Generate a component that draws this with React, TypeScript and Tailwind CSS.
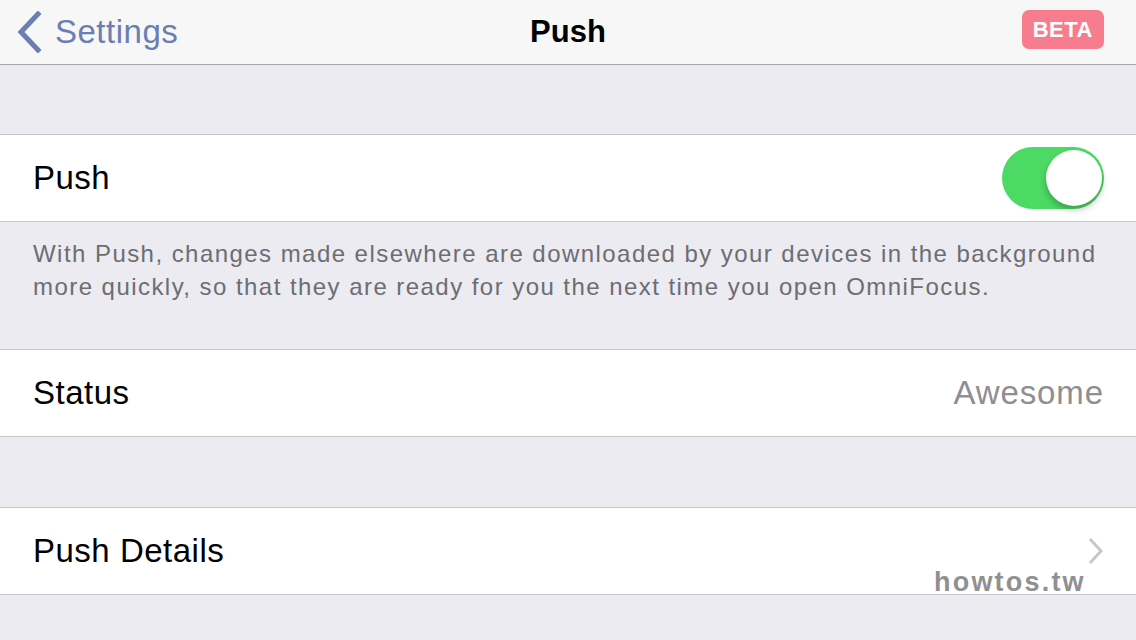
const FONT = { fontFamily: '"Liberation Sans", Arial, sans-serif' }

function BackChevron() {
  return (
    <svg width="26" height="42" viewBox="0 0 26 42" fill="none" aria-hidden="true">
      <path d="M22 3 L5 21 L22 39" stroke="#6a7eb1" strokeWidth="5" strokeLinecap="square" />
    </svg>
  )
}

function DisclosureChevron() {
  return (
    <svg width="18" height="28" viewBox="0 0 18 28" fill="none" aria-hidden="true">
      <path d="M3 2 L14 14 L3 26" stroke="#c7c7cc" strokeWidth="3" />
    </svg>
  )
}

function Toggle() {
  return (
    <div className="relative h-[62px] w-[102px] rounded-full bg-[#4cd964]">
      <div className="absolute right-[2px] top-[3px] h-[56px] w-[56px] rounded-full bg-white shadow-[0_4px_6px_rgba(0,0,0,0.25)]" />
    </div>
  )
}

export default function App() {
  return (
    <div className="relative h-[640px] w-[1136px] overflow-hidden bg-[#ebebf1]" style={FONT}>
      {/* Nav bar */}
      <div className="flex h-[65px] items-center justify-between border-b border-[#a7a7aa] bg-[#f7f7f8] pl-[16px] pr-[32px]">
        <div className="flex w-[216px] items-center gap-[13px]">
          <BackChevron />
          <span className="text-[33px] tracking-[0.5px] text-[#6a7eb1]">Settings</span>
        </div>
        <span className="text-[31px] font-bold text-black">Push</span>
        <div className="flex w-[200px] justify-end">
          <span className="mb-[5px] rounded-[7px] bg-[#f77d8e] px-[11px] py-[5px] text-[22px] font-bold leading-[29px] tracking-[0.5px] text-white">
            BETA
          </span>
        </div>
      </div>

      <div className="h-[69px]" />

      {/* Push row */}
      <div className="flex h-[88px] items-center justify-between border-y border-[#c8c7cc] bg-white pl-[33px] pr-[32px]">
        <span className="text-[33px] tracking-[0.5px] text-black">Push</span>
        <Toggle />
      </div>

      <div className="h-[127px] px-[33px] pt-[15px] text-[24px] leading-[33px] tracking-[1.45px] text-[#6d6d72]">
        With Push, changes made elsewhere are downloaded by your devices in the background
        <br />
        more quickly, so that they are ready for you the next time you open OmniFocus.
      </div>

      {/* Status row */}
      <div className="flex h-[88px] items-center justify-between border-y border-[#c8c7cc] bg-white pl-[33px] pr-[32px]">
        <span className="text-[33px] tracking-[0.5px] text-black">Status</span>
        <span className="text-[33px] tracking-[0.9px] text-[#8e8e93]">Awesome</span>
      </div>

      <div className="h-[70px]" />

      {/* Push Details row */}
      <div className="flex h-[88px] items-center justify-between border-y border-[#c8c7cc] bg-white pl-[33px] pr-[31px]">
        <span className="text-[33px] tracking-[0.5px] text-black">Push Details</span>
        <DisclosureChevron />
      </div>

      {/* Watermark */}
      <span className="absolute left-[934px] top-[562px] text-[27px] font-bold tracking-[2.2px] text-[#909090]">
        howtos.tw
      </span>
    </div>
  )
}
